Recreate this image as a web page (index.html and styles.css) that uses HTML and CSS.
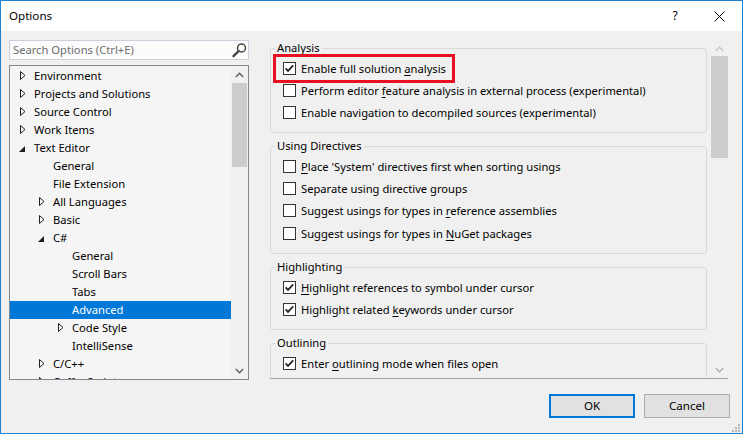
FILE: index.html
```html
<!DOCTYPE html>
<html>
<head>
<meta charset="utf-8">
<title>Options</title>
<link rel="stylesheet" href="styles.css">
</head>
<body>
<div class="window">
  <div class="titlebar">
    <span class="title">Options</span>
    <span class="help">?</span>
    <svg class="close" width="11" height="11" viewBox="0 0 11 11"><path d="M0.5 0.5 L10.5 10.5 M10.5 0.5 L0.5 10.5" stroke="#000" stroke-width="1" fill="none"/></svg>
  </div>
  <div class="main">
    <div class="left">
      <div class="search">
        <span class="ph">Search Options (Ctrl+E)</span>
        <svg class="mag" width="16" height="16" viewBox="0 0 16 16"><circle cx="10.5" cy="6" r="4" stroke="#444" stroke-width="1.5" fill="none"/><path d="M7.6 9 L2.5 14.2" stroke="#444" stroke-width="2.4" stroke-linecap="round"/></svg>
      </div>
      <div class="tree">
        <div class="tree-list">
          <div class="row l0"><span class="arrow"><svg width="6" height="9" viewBox="0 0 6 9"><path d="M0.5 0.5 L5 4.5 L0.5 8.5 Z" fill="none" stroke="#1e1e1e"/></svg></span><span class="lbl">Environment</span></div>
          <div class="row l0"><span class="arrow"><svg width="6" height="9" viewBox="0 0 6 9"><path d="M0.5 0.5 L5 4.5 L0.5 8.5 Z" fill="none" stroke="#1e1e1e"/></svg></span><span class="lbl">Projects and Solutions</span></div>
          <div class="row l0"><span class="arrow"><svg width="6" height="9" viewBox="0 0 6 9"><path d="M0.5 0.5 L5 4.5 L0.5 8.5 Z" fill="none" stroke="#1e1e1e"/></svg></span><span class="lbl">Source Control</span></div>
          <div class="row l0"><span class="arrow"><svg width="6" height="9" viewBox="0 0 6 9"><path d="M0.5 0.5 L5 4.5 L0.5 8.5 Z" fill="none" stroke="#1e1e1e"/></svg></span><span class="lbl">Work Items</span></div>
          <div class="row l0"><span class="arrow"><svg class="exp" width="6" height="6" viewBox="0 0 6 6"><path d="M6 0 L6 6 L0 6 Z" fill="#1e1e1e"/></svg></span><span class="lbl">Text Editor</span></div>
          <div class="row l1"><span class="arrow"></span><span class="lbl">General</span></div>
          <div class="row l1"><span class="arrow"></span><span class="lbl">File Extension</span></div>
          <div class="row l1"><span class="arrow"><svg width="6" height="9" viewBox="0 0 6 9"><path d="M0.5 0.5 L5 4.5 L0.5 8.5 Z" fill="none" stroke="#1e1e1e"/></svg></span><span class="lbl">All Languages</span></div>
          <div class="row l1"><span class="arrow"><svg width="6" height="9" viewBox="0 0 6 9"><path d="M0.5 0.5 L5 4.5 L0.5 8.5 Z" fill="none" stroke="#1e1e1e"/></svg></span><span class="lbl">Basic</span></div>
          <div class="row l1"><span class="arrow"><svg class="exp" width="6" height="6" viewBox="0 0 6 6"><path d="M6 0 L6 6 L0 6 Z" fill="#1e1e1e"/></svg></span><span class="lbl">C#</span></div>
          <div class="row l2"><span class="arrow"></span><span class="lbl">General</span></div>
          <div class="row l2"><span class="arrow"></span><span class="lbl">Scroll Bars</span></div>
          <div class="row l2"><span class="arrow"></span><span class="lbl">Tabs</span></div>
          <div class="row l2 sel"><span class="arrow"></span><span class="lbl">Advanced</span></div>
          <div class="row l2"><span class="arrow"><svg width="6" height="9" viewBox="0 0 6 9"><path d="M0.5 0.5 L5 4.5 L0.5 8.5 Z" fill="none" stroke="#1e1e1e"/></svg></span><span class="lbl">Code Style</span></div>
          <div class="row l2"><span class="arrow"></span><span class="lbl">IntelliSense</span></div>
          <div class="row l1"><span class="arrow"><svg width="6" height="9" viewBox="0 0 6 9"><path d="M0.5 0.5 L5 4.5 L0.5 8.5 Z" fill="none" stroke="#1e1e1e"/></svg></span><span class="lbl">C/C++</span></div>
          <div class="row l1"><span class="arrow"><svg width="6" height="9" viewBox="0 0 6 9"><path d="M0.5 0.5 L5 4.5 L0.5 8.5 Z" fill="none" stroke="#1e1e1e"/></svg></span><span class="lbl">CoffeeScript</span></div>
        </div>
        <div class="vscroll">
          <div class="sb-btn"><svg width="9" height="6" viewBox="0 0 9 6"><polyline points="0.8,5 4.5,1.2 8.2,5" stroke="#606060" stroke-width="1.4" fill="none"/></svg></div>
          <div class="thumb"></div>
          <div class="track"></div>
          <div class="sb-btn"><svg width="9" height="6" viewBox="0 0 9 6"><polyline points="0.8,1 4.5,4.8 8.2,1" stroke="#606060" stroke-width="1.4" fill="none"/></svg></div>
        </div>
      </div>
    </div>
    <div class="right">
      <div class="pcontent">
        <fieldset class="group">
          <legend>Analysis</legend>
          <div class="opt">
            <span class="cb"><svg width="11" height="11" viewBox="0 0 11 11"><polyline points="1.6,5.4 4,7.9 9.2,2.4" stroke="#222" stroke-width="1.7" fill="none"/></svg></span>
            <span>Enable full solution <u>a</u>nalysis</span>
            <span class="hl"></span>
          </div>
          <div class="opt"><span class="cb"></span><span>Perform editor <u>f</u>eature analysis in external process (experimental)</span></div>
          <div class="opt"><span class="cb"></span><span>Enable navigation to decompiled sources (experimental)</span></div>
        </fieldset>
        <fieldset class="group">
          <legend>Using Directives</legend>
          <div class="opt"><span class="cb"></span><span><u>P</u>lace 'System' directives first when sorting usings</span></div>
          <div class="opt"><span class="cb"></span><span>Separate using directive groups</span></div>
          <div class="opt"><span class="cb"></span><span>Suggest usings for types in <u>r</u>eference assemblies</span></div>
          <div class="opt tall"><span class="cb"></span><span>Suggest usings for types in <u>N</u>uGet packages</span></div>
        </fieldset>
        <fieldset class="group">
          <legend>Highlighting</legend>
          <div class="opt"><span class="cb"><svg width="11" height="11" viewBox="0 0 11 11"><polyline points="1.6,5.4 4,7.9 9.2,2.4" stroke="#222" stroke-width="1.7" fill="none"/></svg></span><span><u>H</u>ighlight references to symbol under cursor</span></div>
          <div class="opt"><span class="cb"><svg width="11" height="11" viewBox="0 0 11 11"><polyline points="1.6,5.4 4,7.9 9.2,2.4" stroke="#222" stroke-width="1.7" fill="none"/></svg></span><span>Highlight related <u>k</u>eywords under cursor</span></div>
        </fieldset>
        <fieldset class="group last">
          <legend>Outlining</legend>
          <div class="opt"><span class="cb"><svg width="11" height="11" viewBox="0 0 11 11"><polyline points="1.6,5.4 4,7.9 9.2,2.4" stroke="#222" stroke-width="1.7" fill="none"/></svg></span><span>Enter <u>o</u>utlining mode when files open</span></div>
        </fieldset>
      </div>
      <div class="vscroll2">
        <div class="sb-btn"><svg width="9" height="6" viewBox="0 0 9 6"><polyline points="0.8,5 4.5,1.2 8.2,5" stroke="#c2c2c2" stroke-width="1.2" fill="none"/></svg></div>
        <div class="thumb2"></div>
        <div class="track"></div>
        <div class="sb-btn"><svg width="9" height="6" viewBox="0 0 9 6"><polyline points="0.8,1 4.5,4.8 8.2,1" stroke="#a8a8a8" stroke-width="1.2" fill="none"/></svg></div>
      </div>
    </div>
  </div>
  <div class="buttons">
    <div class="btn default"><span class="lbl">OK</span></div>
    <div class="btn"><span class="lbl">Cancel</span></div>
  </div>
  <svg class="grip" width="10" height="10" viewBox="0 0 10 10">
    <rect x="7" y="1" width="2" height="2" fill="#b8b8b8"/>
    <rect x="4" y="4" width="2" height="2" fill="#b8b8b8"/>
    <rect x="7" y="4" width="2" height="2" fill="#b8b8b8"/>
    <rect x="1" y="7" width="2" height="2" fill="#b8b8b8"/>
    <rect x="4" y="7" width="2" height="2" fill="#b8b8b8"/>
    <rect x="7" y="7" width="2" height="2" fill="#b8b8b8"/>
  </svg>
</div>
</body>
</html>
```

FILE: styles.css
```css
* { box-sizing: border-box; }
html, body { margin: 0; padding: 0; }
body {
  font-family: "Noto Sans", "Open Sans", sans-serif;
  font-size: 11.2px;
  color: #000;
  background: #f0f0f0;
}
.window {
  position: relative;
  width: 743px;
  height: 434px;
  border: 1px solid #1883d7;
  background: #f0f0f0;
  display: flex;
  flex-direction: column;
  overflow: hidden;
}
.titlebar {
  height: 30px;
  flex: none;
  background: #fff;
  display: flex;
  align-items: center;
  padding-left: 8px;
}
.title { flex: 1; font-size: 11.6px; padding-bottom: 2px; }
.help { width: 20px; text-align: center; margin-right: 29px; font-size: 12px; padding-bottom: 2px; }
.close { margin-right: 17px; flex: none; }

.main {
  display: flex;
  height: 349px;
  flex: none;
  padding: 9px 14px 0 8px;
}
.left {
  width: 240px;
  display: flex;
  flex-direction: column;
  gap: 5px;
  flex: none;
}
.search {
  height: 20px;
  border: 1px solid #cccedb;
  background: #fcfcfc;
  display: flex;
  align-items: center;
  padding-left: 3px;
}
.ph { color: #6d6d6d; flex: 1; padding-bottom: 2px; }
.mag { margin-right: 1px; flex: none; }

.tree {
  height: 315px;
  border: 1px solid #828790;
  background: #f5f5f5;
  display: flex;
  overflow: hidden;
}
.tree-list {
  width: 221px;
  padding-top: 1px;
  overflow: hidden;
  flex: none;
}
.row {
  height: 18px;
  display: flex;
  align-items: center;
  white-space: nowrap;
  padding-left: 10px;
}
.lbl { padding-bottom: 2px; }
.row.l1 { padding-left: 29px; }
.row.l2 { padding-left: 48px; }
.row.sel { background: #0078d7; color: #fff; }
.arrow {
  width: 14px;
  height: 18px;
  flex: none;
  display: flex;
  align-items: center;
}
.arrow svg { margin-top: -1px; }
.arrow .exp { margin-left: -1px; margin-top: 1px; }

.vscroll {
  width: 17px;
  background: #f0f0f0;
  display: flex;
  flex-direction: column;
  flex: none;
}
.sb-btn {
  height: 17px;
  flex: none;
  display: flex;
  align-items: center;
  justify-content: center;
}
.thumb { height: 84px; margin: 0 1px; background: #cdcdcd; flex: none; }
.track { flex: 1; }

.right {
  margin-left: 21px;
  width: 458px;
  height: 339px;
  border-bottom: 1px solid #a0a0a0;
  display: flex;
  flex: none;
}
.pcontent {
  width: 441px;
  height: 338px;
  overflow: hidden;
  flex: none;
}
.vscroll2 {
  width: 17px;
  height: 338px;
  display: flex;
  flex-direction: column;
  flex: none;
}
.thumb2 { height: 102px; margin-top: -1px; background: #cdcdcd; flex: none; }

.group {
  width: 437px;
  min-width: 0;
  margin: 0 0 5px 0;
  padding: 1px 12px 9px 12px;
  border: 1px solid #dadada;
  border-radius: 3px;
}
.group.last { padding-bottom: 40px; }
.group legend {
  padding: 0 2px;
  margin-left: -8px;
  height: 16px;
  line-height: 16px;
}
.opt {
  position: relative;
  height: 22px;
  display: flex;
  align-items: center;
  white-space: nowrap;
}
.opt.tall { height: 23px; padding-top: 2px; }
.cb {
  width: 13px;
  height: 13px;
  border: 1px solid #333;
  background: #fff;
  margin-right: 5px;
  flex: none;
  display: flex;
}
u { text-decoration-thickness: 1px; text-underline-offset: 2px; }
.hl {
  position: absolute;
  left: -10px;
  top: -3px;
  width: 182px;
  height: 29px;
  border: 3px solid #e81123;
  pointer-events: none;
}

.buttons {
  display: flex;
  justify-content: flex-end;
  gap: 9px;
  margin-top: 14px;
  padding-right: 12px;
  flex: none;
}
.btn {
  width: 86px;
  height: 24px;
  background: #e1e1e1;
  border: 1px solid #adadad;
  display: flex;
  align-items: center;
  justify-content: center;
  font-size: 11.6px;
}
.btn.default { border: 2px solid #0078d7; }
.grip {
  position: absolute;
  right: 1px;
  bottom: 0px;
}
```
